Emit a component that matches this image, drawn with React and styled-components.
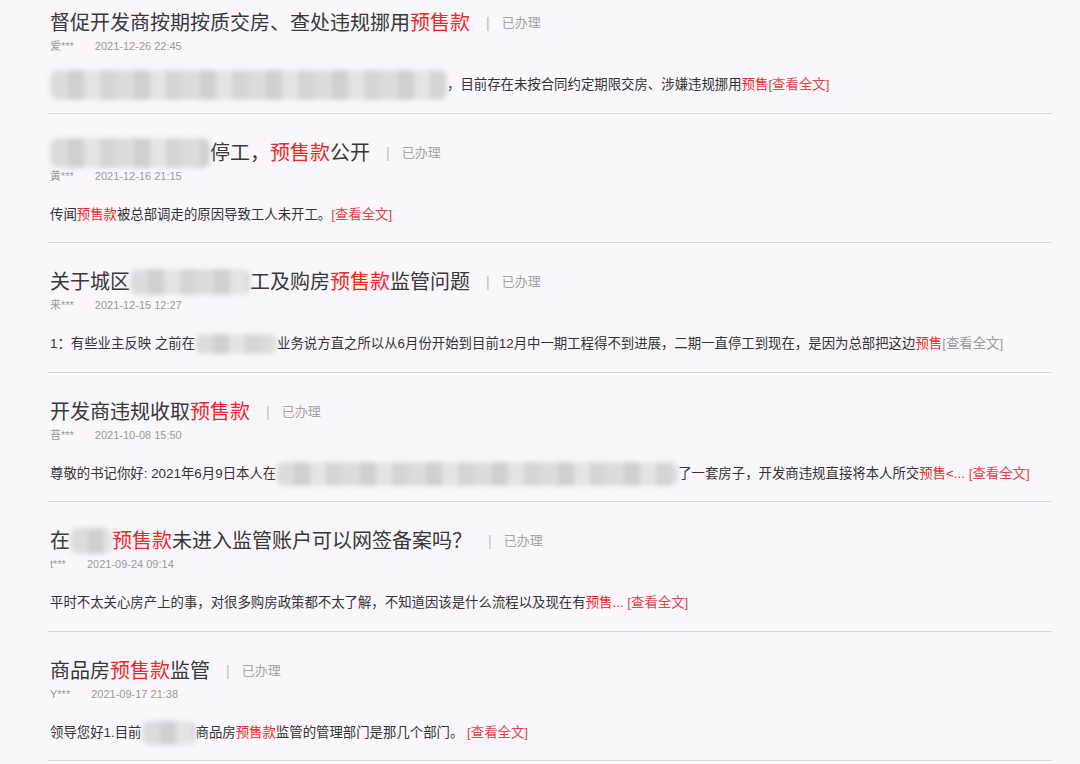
import React from "react";
import styled, { createGlobalStyle } from "styled-components";

const GlobalStyle = createGlobalStyle`
  html, body {
    margin: 0;
    padding: 0;
    background: #f9f7fb;
  }
  body {
    font-family: "Liberation Sans", "Noto Sans CJK SC", sans-serif;
    color: #333;
  }
`;

const items = [
  {
    title: [{ t: "督促开发商按期按质交房、查处违规挪用" }, { t: "预售款", red: true }],
    name: "爱***",
    date: "2021-12-26 22:45",
    body: [
      { blur: 397, h: 30 },
      { t: "，目前存在未按合同约定期限交房、涉嫌违规挪用" },
      { t: "预售", red: true },
    ],
  },
  {
    title: [{ blur: 160, h: 30 }, { t: "停工，" }, { t: "预售款", red: true }, { t: "公开" }],
    name: "黄***",
    date: "2021-12-16 21:15",
    body: [{ t: "传闻" }, { t: "预售款", red: true }, { t: "被总部调走的原因导致工人未开工。" }],
  },
  {
    title: [
      { t: "关于城区" },
      { blur: 120, h: 26 },
      { t: "工及购房" },
      { t: "预售款", red: true },
      { t: "监管问题" },
    ],
    name: "来***",
    date: "2021-12-15 12:27",
    body: [
      { t: "1：有些业主反映 之前在" },
      { blur: 82, h: 20 },
      { t: "业务说方直之所以从6月份开始到目前12月中一期工程得不到进展，二期一直停工到现在，是因为总部把这边" },
      { t: "预售", red: true },
    ],
    grayMore: true,
  },
  {
    title: [{ t: "开发商违规收取" }, { t: "预售款", red: true }],
    name: "苔***",
    date: "2021-10-08 15:50",
    body: [
      { t: "尊敬的书记你好: 2021年6月9日本人在" },
      { blur: 402, h: 24 },
      { t: "了一套房子，开发商违规直接将本人所交" },
      { t: "预售<... ", red: true },
    ],
  },
  {
    title: [{ t: "在" }, { blur: 42, h: 26 }, { t: "预售款", red: true }, { t: "未进入监管账户可以网签备案吗？" }],
    name: "t***",
    date: "2021-09-24 09:14",
    body: [
      { t: "平时不太关心房产上的事，对很多购房政策都不太了解，不知道因该是什么流程以及现在有" },
      { t: "预售... ", red: true },
    ],
  },
  {
    title: [{ t: "商品房" }, { t: "预售款", red: true }, { t: "监管" }],
    name: "Y***",
    date: "2021-09-17 21:38",
    body: [
      { t: "领导您好1.目前" },
      { blur: 54, h: 24 },
      { t: "商品房" },
      { t: "预售款", red: true },
      { t: "监管的管理部门是那几个部门。 " },
    ],
  },
];

function renderParts(parts) {
  return parts.map((p, i) =>
    p.blur ? (
      <Blur key={i} $w={p.blur} $h={p.h} />
    ) : p.red ? (
      <Red key={i}>{p.t}</Red>
    ) : (
      <span key={i}>{p.t}</span>
    )
  );
}

export default function App() {
  return (
    <>
      <GlobalStyle />
      <List>
        {items.map((item, i) => (
          <Item key={i}>
            <TitleRow>
              <Title>{renderParts(item.title)}</Title>
              <Pipe>|</Pipe>
              <Status>已办理</Status>
            </TitleRow>
            <Meta>
              <span>{item.name}</span>
              <Date>{item.date}</Date>
            </Meta>
            <Body>
              {renderParts(item.body)}
              <More $gray={item.grayMore}>[查看全文]</More>
            </Body>
          </Item>
        ))}
      </List>
    </>
  );
}

const List = styled.div`
  width: 1004px;
  margin-left: 48px;
  display: flex;
  flex-direction: column;
`;

const Item = styled.div`
  padding: 24px 0 17.5px 2px;
  border-bottom: 1px solid #d9d6dc;

  &:first-child {
    padding-top: 8px;
  }
`;

const TitleRow = styled.div`
  display: flex;
  align-items: center;
  height: 30px;
  white-space: nowrap;
`;

const Title = styled.div`
  font-size: 20px;
  line-height: 30px;
  color: #383838;
  display: flex;
  align-items: center;
`;

const Pipe = styled.span`
  margin: 0 12px 0 16px;
  font-size: 14px;
  color: #bbb;
`;

const Status = styled.span`
  font-size: 13px;
  line-height: 26px;
  color: #a4a4a6;
`;

const Meta = styled.div`
  margin-top: 1px;
  height: 14px;
  font-size: 11px;
  line-height: 14px;
  color: #9a9a9c;
  display: flex;
`;

const Date = styled.span`
  margin-left: 21px;
`;

const Body = styled.div`
  margin-top: 22px;
  height: 20px;
  font-size: 13.4px;
  line-height: 20px;
  color: #333;
  display: flex;
  align-items: center;
  white-space: pre;
`;

const Red = styled.span`
  color: #f0262b;
`;

const More = styled.span`
  color: ${(p) => (p.$gray ? "#9a9a9c" : "#e0454a")};
`;

const Blur = styled.span`
  display: inline-block;
  flex: none;
  width: ${(p) => p.$w}px;
  height: ${(p) => p.$h}px;
  border-radius: 8px;
  background: repeating-linear-gradient(
    90deg,
    #dcdcde 0 18px,
    #d0d0d2 18px 34px,
    #e4e4e6 34px 50px,
    #d5d5d7 50px 66px
  );
  filter: blur(2.5px);
`;
